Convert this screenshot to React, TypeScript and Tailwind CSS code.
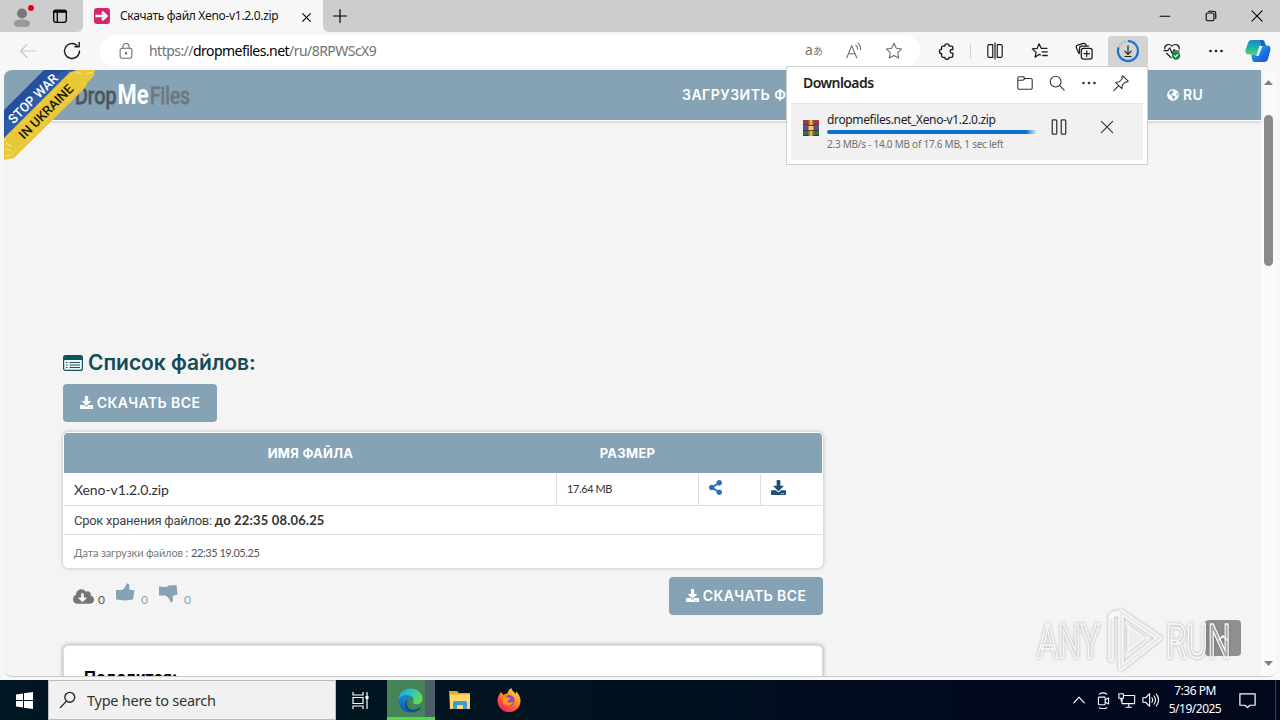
import React from "react";
import { FaDownload, FaShareAlt, FaCloudDownloadAlt, FaGlobeAmericas } from "react-icons/fa";

type IconProps = { children: React.ReactNode; size?: number; className?: string; sw?: number };

function Icon({ children, size = 20, className = "", sw = 1.2 }: IconProps) {
  return (
    <svg width={size} height={size} viewBox="0 0 20 20" fill="none" stroke="currentColor" strokeWidth={sw} strokeLinecap="round" strokeLinejoin="round" className={`shrink-0 ${className}`}>
      {children}
    </svg>
  );
}

function Dots() {
  return (
    <Icon>
      <g fill="currentColor" stroke="none">
        <circle cx="4.500" cy="10" r="1.3" />
        <circle cx="10" cy="10" r="1.3" />
        <circle cx="15.500" cy="10" r="1.3" />
      </g>
    </Icon>
  );
}

function Cell({ children, className = "" }: { children: React.ReactNode; className?: string }) {
  return <div className={`flex w-11 shrink-0 items-center justify-center ${className}`}>{children}</div>;
}

function TitleBar() {
  return (
    <div className="flex h-8 shrink-0 bg-[#f7f7f7]">
      <div className="flex w-[83px] items-center rounded-br-md bg-[#cdcdcd] pl-3">
        <svg width="24" height="26" viewBox="0 0 24 26" className="shrink-0">
          <circle cx="10" cy="10.5" r="5" fill="#777" />
          <path d="M2 20.500c0-3 3-4 8-4s8 1 8 4-3 3.500-8 3.500-8-.5-8-3.500z" fill="#999" />
          <circle cx="19" cy="5" r="3" fill="#e3001b" />
        </svg>
        <Icon size={18} sw={1.500} className="ml-[15px] text-black">
          <rect x="3" y="3.500" width="14" height="13.500" rx="2.500" />
          <path d="M3.500 5.200h13" strokeWidth="2.600" />
          <path d="M7 6v11" />
        </Icon>
      </div>
      <div className="flex w-[240px] items-center pl-[11px]">
        <svg width="16" height="16" viewBox="0 0 16 16" className="shrink-0">
          <rect width="16" height="16" rx="3" fill="#d3286b" />
          <path d="M1.500 8h10M8 4l4.500 4L8 12" stroke="#fff" strokeWidth="2.600" fill="none" />
        </svg>
        <span className="ml-[10px] w-[172px] whitespace-nowrap text-[12px] tracking-[-0.32px] text-[#111]">Скачать файл Xeno-v1.2.0.zip</span>
        <Icon size={11} sw={2} className="ml-[9px] mt-[2px] text-black">
          <path d="M3 3l14 14M17 3L3 17" />
        </Icon>
      </div>
      <div className="flex flex-1 items-center rounded-bl-md bg-[#cdcdcd] pl-[9px] text-black">
        <Icon size={16} sw={1.5}>
          <path d="M10 2v16M2 10h16" />
        </Icon>
        <div className="flex-1" />
        <div className="flex w-[138px]">
          <div className="flex w-[46px] justify-center">
            <Icon size={12} sw={1.900}><path d="M2 10.500h16" /></Icon>
          </div>
          <div className="flex w-[46px] justify-center">
            <Icon size={12} sw={1.800}>
              <rect x="2" y="5" width="13" height="13" rx="2.500" />
              <path d="M6 2h8a4 4 0 0 1 4 4v8" />
            </Icon>
          </div>
          <div className="flex w-[46px] justify-center">
            <Icon size={12} sw={1.800}><path d="M1.500 1.500l17 17M18.500 1.500l-17 17" /></Icon>
          </div>
        </div>
      </div>
    </div>
  );
}

function CopilotLogo() {
  return (
    <svg width="26" height="24" viewBox="0 0 26 24">
      <defs>
        <linearGradient id="cpa" x1="0" y1="0" x2="0" y2="1">
          <stop offset="0" stopColor="#1a86c8" />
          <stop offset=".55" stopColor="#18b7b0" />
          <stop offset="1" stopColor="#5fd15c" />
        </linearGradient>
        <linearGradient id="cpb" x1="0" y1="0" x2="1" y2="1">
          <stop offset="0" stopColor="#2fc0f3" />
          <stop offset=".6" stopColor="#1b6ce0" />
          <stop offset="1" stopColor="#1453c4" />
        </linearGradient>
      </defs>
      <path d="M7 1h9c2 0 2.500 1 3 3l.7 2.500h-2.400c-2 0-3 1-3.600 3L12.500 13c-.6 1.700-1.500 2.500-3 2.500H4c-3 0-4-2-3.300-5L3 4c.7-2 2-3 4-3z" fill="url(#cpa)" />
      <path d="M19 23h-9c-2 0-2.500-1-3-3l-.7-4.500h2.400c2 0 3.500 0 4.300-2.500L14.500 9c.6-1.700 1.300-2.500 2.800-2.500H22c3 0 4 2 3.300 5L23 20c-.7 2-2 3-4 3z" fill="url(#cpb)" />
      <path d="M15 1h2c2 0 2.500 1 3 3l1 3h-5z" fill="#1663c9" />
      <path d="M14.500 7h3l-4 10H9.500c2 0 2.500-1 3-2.500z" fill="#f0fbff" />
    </svg>
  );
}

function Toolbar() {
  return (
    <div className="flex h-[38px] shrink-0 bg-[#f7f7f7] pl-[6px] text-[#1b1b1b]">
      <Cell className="text-[#c9c9c9]">
        <Icon sw={1.200}><path d="M17.500 10H3M9 3.500L2.500 10 9 16.500" /></Icon>
      </Cell>
      <Cell>
        <Icon sw={1.400}><path d="M17.500 10A7.500 7.500 0 1 1 15 4.400M17.200 1.500v4.200H13" /></Icon>
      </Cell>
      <div className="my-[3px] ml-[6px] flex w-[820px] shrink-0 items-center rounded-full bg-white pr-[6px] text-[#6a6a6a]">
        <div className="flex w-[49px] justify-center pl-[3px]">
          <Icon size={18}>
            <rect x="3.500" y="7" width="13" height="11" rx="2" />
            <path d="M6.500 7V5.200a3.500 3.500 0 0 1 7 0V7" />
            <circle cx="10" cy="12.500" r=".8" fill="currentColor" />
          </Icon>
        </div>
        <span className="flex-1 whitespace-nowrap pb-px text-[14px] tracking-[-0.54px] text-[#717171]">
          https://<span className="text-black">dropmefiles.net</span>/ru/8RPWScX9
        </span>
        <div className="flex w-10 justify-center whitespace-nowrap pb-px text-[#777]">
          <span className="text-[14px] leading-5">a</span>
          <span className="font-['Noto_Sans_CJK_JP',sans-serif] text-[10px] leading-[22px]">あ</span>
        </div>
        <div className="flex w-10 justify-center">
          <Icon size={18}><path d="M2 17.500L7.500 4 13 17.500M4 13h7M12 3.500c1.500 1 2 2.500 2 4.500M14.500 1.500c2 1.500 3 4 2.700 7" /></Icon>
        </div>
        <div className="flex w-10 justify-center">
          <Icon size={18} sw={1.200}><path d="M10 1.500l2.600 5.400 5.900.8-4.300 4.100 1 5.900-5.200-2.800-5.200 2.800 1-5.900L1.500 7.700l5.900-.8z" /></Icon>
        </div>
      </div>
      <Cell className="ml-[5px]">
        <Icon size={18} sw={1.500}>
          <path d="M5 4.500h2.500a2.400 2.400 0 0 1 4.800 0H15a1.500 1.500 0 0 1 1.500 1.500v2.300h-1a2 2 0 0 0 0 4h1V15.500a1.500 1.500 0 0 1-1.500 1.500h-2.700a2.400 2.400 0 0 1-4.800 0H5.500A1.500 1.500 0 0 1 4 15.500V13a2.400 2.400 0 1 1 0-4.800V6a1.500 1.500 0 0 1 1-1.500z" />
        </Icon>
      </Cell>
      <div className="my-[12px] ml-px w-px shrink-0 bg-[#cfcfcf]" />
      <Cell className="ml-[2px]">
        <Icon size={18} sw={1.300}>
          <path d="M7.500 3H3.500A1.500 1.500 0 0 0 2 4.500v11A1.500 1.500 0 0 0 3.500 17H7.500zM12.500 3h4A1.500 1.500 0 0 1 18 4.500v11a1.500 1.500 0 0 1-1.500 1.500H12.500zM10 1v18" />
        </Icon>
      </Cell>
      <Cell className="ml-px">
        <Icon size={18} sw={1.400}>
          <path d="M10.500 14.500L9 13.800l-4.500 3 1.200-5.300L1.500 7.600l5.300-.5L9 2l2.300 5h6.500M12.500 11H18M13 15h5" />
        </Icon>
      </Cell>
      <Cell>
        <Icon size={18} sw={1.400}>
          <rect x="7" y="7" width="12" height="12" rx="2.500" />
          <path d="M13 10v6M10 13h6M4.500 13L1.500 6.500C1 5 1.500 4 3 3.500L9.500 1.500c1.500-.3 2.500.2 3 2.200M5 12V7.500C5 6 6 4.500 7.500 4.500H15" />
        </Icon>
      </Cell>
      <Cell>
        <div className="flex h-[31px] w-10 items-center justify-center rounded bg-[#d3d3d3]">
          <svg width="24" height="24" viewBox="0 0 24 24" fill="none">
            <circle cx="12" cy="12" r="10" stroke="#b8c4ce" strokeWidth="2" />
            <path d="M12 2a10 10 0 1 1-9.400 6.500" stroke="#1875c8" strokeWidth="2.200" />
            <path d="M12 6.500v8.500M8.500 11.800L12 15.300l3.500-3.500M8.500 17.500h7" stroke="#222" strokeWidth="1.200" />
          </svg>
        </div>
      </Cell>
      <Cell>
        <Icon size={18} sw={1.300}>
          <path d="M9 17.500L4 12.500M2 7.500c-.5-4 4.500-6.500 8-3 3.500-3.500 8.500-1 8 3.200M1 9.500h4.500l2-3 2.500 6 2.500-4 1.200 1.500H18" />
          <circle cx="14.500" cy="15" r="4" fill="#14853d" stroke="#14853d" />
          <path d="M12.500 15.200l1.500 1.300 2.500-2.700" stroke="#fff" />
        </Icon>
      </Cell>
      <Cell><Dots /></Cell>
      <div className="flex w-10 shrink-0 items-center justify-center"><CopilotLogo /></div>
    </div>
  );
}

function Ribbon() {
  return (
    <svg width="96" height="92" viewBox="0 0 96 92" className="absolute left-0 top-0">
      <path d="M0 66V40L40 0H71L0 69z" fill="#24509a" />
      <path d="M0 52L1 67 68 1 62 0 56 3z" fill="#2d5ca8" />
      <path d="M0 68L66 2 74 0H91L90 6 84 12 80 19 10 88 0 90z" fill="#e9c736" />
      <path d="M0 71L69 3M6 86L82 12" stroke="#f2d862" strokeWidth="1" strokeDasharray="9 4 3 6" />
      <path d="M2 73l5 3M1 79l7 2M1 86l5-1M72 2l5 2M82 4l7-2" stroke="#f3e39c" strokeWidth="1.200" />
      <g fontFamily="Roboto, sans-serif" fontSize="13" fontWeight="500">
        <text transform="translate(9.500 54.500) rotate(-45)" fill="#fff" textLength="64" lengthAdjust="spacingAndGlyphs">STOP WAR</text>
        <text transform="translate(20 70) rotate(-45)" fill="#1c1a10" textLength="71" lengthAdjust="spacingAndGlyphs">IN UKRAINE</text>
      </g>
    </svg>
  );
}

function SiteHeader() {
  return (
    <div className="relative flex h-[51px] shrink-0 items-center border-b border-white bg-[#86a2b5] text-white shadow-[0_1px_3px_rgba(0,0,0,0.18)]">
      <svg width="120" height="40" viewBox="0 -5 120 40" className="ml-[70px]" fontFamily="Roboto, sans-serif" fontSize="23">
        <text x="1" y="23.500" fill="#4c565e" stroke="#4c565e" strokeWidth=".9" textLength="41.500" lengthAdjust="spacingAndGlyphs">Drop</text>
        <text x="43.500" y="23.500" fill="#fff" fontSize="27" fontWeight="700" textLength="31" lengthAdjust="spacingAndGlyphs">Me</text>
        <text x="76" y="23.500" fill="#6b7982" stroke="#6b7982" strokeWidth=".9" textLength="40" lengthAdjust="spacingAndGlyphs">Files</text>
      </svg>
      <span className="ml-[488px] w-[180px] whitespace-nowrap pb-px font-['Inter',sans-serif] text-[14px] font-semibold tracking-[0.5px]">ЗАГРУЗИТЬ ФАЙЛЫ</span>
      <div className="ml-auto mr-[58px] flex items-center gap-[4px] pb-px font-['Inter',sans-serif] text-[14px] font-semibold tracking-[0.300px]">
        <FaGlobeAmericas size={12} />RU
      </div>
      <Ribbon />
    </div>
  );
}

function DownloadAll({ className = "" }: { className?: string }) {
  return (
    <button className={`flex h-[38px] w-[154px] shrink-0 items-center justify-center gap-1 whitespace-nowrap rounded bg-[#86a2b5] pb-px font-['Inter',sans-serif] text-[14px] font-semibold tracking-[0.4px] text-white ${className}`}>
      <FaDownload size={13} />
      <span>СКАЧАТЬ ВСЕ</span>
    </button>
  );
}

function FileTable() {
  return (
    <div className="mt-[10px] flex h-[136px] w-[760px] flex-col overflow-hidden rounded-[5px] border border-white bg-white shadow-[0_0_4px_rgba(0,0,0,0.25)]">
      <div className="flex h-10 shrink-0 items-center bg-[#86a2b5] pt-px font-['Inter',sans-serif] text-[13px] font-bold tracking-[0.3px] text-white">
        <span className="w-[493px] text-center">ИМЯ ФАЙЛА</span>
        <span className="w-[141px] text-center">РАЗМЕР</span>
      </div>
      <div className="flex h-[33px] shrink-0 border-b border-[#ddd] pt-px font-['Lato','Roboto',sans-serif] text-[#333]">
        <div className="flex w-[493px] items-center border-r border-[#ddd] pl-[10px] text-[14px] tracking-[-0.07px]">Xeno-v1.2.0.zip</div>
        <div className="flex w-[142px] items-center border-r border-[#ddd] pl-[10px] text-[11px] tracking-[-0.4px]">17.64 MB</div>
        <div className="flex w-[62px] items-center border-r border-[#ddd] pb-[5px] pl-[9px] text-[#2874b5]"><FaShareAlt size={15} /></div>
        <div className="flex items-center pb-[5px] pl-[10px] text-[#1f4e79]"><FaDownload size={15} /></div>
      </div>
      <div className="flex h-[29px] shrink-0 items-center border-b border-[#ddd] pl-[10px] pt-px text-[13px] text-[#333]">
        <span className="whitespace-nowrap font-['Roboto',sans-serif] tracking-[-0.27px] text-[#444]">Срок хранения файлов:</span>
        <b className="ml-[3px] whitespace-nowrap font-['Lato','Open_Sans',sans-serif] tracking-[0.17px]">до 22:35 08.06.25</b>
      </div>
      <div className="flex flex-1 items-center whitespace-nowrap pl-[10px] pt-1 font-['Lato','Roboto',sans-serif] text-[11px] tracking-[-0.15px] text-[#777]">
        Дата загрузки файлов : <span className="ml-[3px] tracking-[-0.45px] text-[#555]">22:35 19.05.25</span>
      </div>
    </div>
  );
}

function Votes() {
  return (
    <div className="flex items-start pl-[10px] font-['Lato',sans-serif] text-[12px] leading-4 text-[#86a2b5]">
      <FaCloudDownloadAlt size={21} className="mt-[9px] text-[#757575]" />
      <span className="ml-[4px] mt-[15px] text-[#555]">0</span>
      <svg width="19" height="18" viewBox="0 0 19 18" className="ml-[11px] mt-[6px]" fill="currentColor">
        <path d="M0 7h6C8.500 5.500 10 3 10.500.5 13.500 0 14 3 13 6.500L18.500 7.500 18 10 17 16.500 9 17.500 0 16.500z" />
      </svg>
      <span className="ml-[6px] mt-[15px]">0</span>
      <svg width="19" height="18" viewBox="0 0 19 18" className="ml-[11px] mt-[8px]" fill="currentColor">
        <path d="M0 1.500L8 2 9 .5 17.500 0l1 9.500-5 1.500c1 3 .5 6-1.500 6.500C10.500 15.500 10 12 6 10.500H0z" />
      </svg>
      <span className="ml-[6px] mt-[15px]">0</span>
    </div>
  );
}

function Watermark() {
  return (
    <svg width="204" height="72" viewBox="0 0 204 72" className="absolute bottom-0 right-[22px]" style={{ filter: "drop-shadow(0 0 1.5px rgba(0,0,0,.3))" }}>
      <g fontFamily="Roboto, sans-serif" fontSize="49" fill="#f4f4f4" fillOpacity=".35" stroke="#f9f9f9" strokeWidth="1.600">
        <text x="2" y="54" textLength="63" lengthAdjust="spacingAndGlyphs">ANY</text>
        <text x="131" y="54" textLength="65" lengthAdjust="spacingAndGlyphs">RUN</text>
      </g>
      <g fill="none" strokeLinejoin="round" strokeLinecap="round">
        <path d="M76 55V15c0-4 3-6 6-5M86 8l38 26-38 30z" stroke="#f9f9f9" strokeWidth="5.500" />
        <path d="M76 55V15M86 8l38 26-38 30z" stroke="#e9e9e9" strokeWidth="2.500" />
        <path d="M93 22l17 12-17 13z" fill="#eeeeee" stroke="#f9f9f9" strokeWidth="1.500" />
      </g>
    </svg>
  );
}

function Page() {
  return (
    <div className="mx-1 flex h-[607px] shrink-0 overflow-hidden rounded-lg border-b border-[#c9c9c9] bg-[#f4f4f4]">
      <main className="relative flex w-[1257px] flex-col">
        <SiteHeader />
        <div className="mt-[227px] ml-[59px] flex w-[760px] flex-col">
          <h1 className="flex h-[31px] items-center whitespace-nowrap pb-[2px] font-['Inter',sans-serif] text-[21px] font-semibold tracking-[-0.04px] text-[#134c59]">
            <svg width="20" height="16" viewBox="0 0 20 16" className="mr-[5px]">
              <rect x=".6" y=".6" width="18.800" height="14.800" rx="2" fill="none" stroke="#0d5563" strokeWidth="1.200" />
              <path d="M1 1h18v4H1z" fill="#0d5563" />
              <path d="M3 7.500h1.500M3 10h1.500M3 12.500h1.500M6.500 7.500H17M6.500 10H17M6.500 12.500H17" stroke="#0d5563" />
            </svg>
            Список файлов:
          </h1>
          <DownloadAll className="mt-[5px]" />
          <FileTable />
          <div className="mt-[9px] flex justify-between">
            <Votes />
            <DownloadAll />
          </div>
          <div className="mt-[30px] h-[100px] shrink-0 rounded-[5px] border border-[#ddd] bg-white pl-5 pt-[19px] font-['Inter',sans-serif] text-[16px] font-bold text-black shadow-[0_0_4px_rgba(0,0,0,0.35)]">
            Поделится:
          </div>
        </div>
        <button className="absolute bottom-[20px] right-[20px] flex h-9 w-9 items-center justify-center rounded-sm bg-[#909090] text-white">
          <Icon size={14} sw={2.500}><path d="M4 13l6-6 6 6" /></Icon>
        </button>
        <Watermark />
      </main>
      <div className="flex w-[15px] flex-col items-center bg-[#fafafa] py-[9px]">
        <svg width="9" height="6" viewBox="0 0 9 6"><path d="M0 6l4.500-5L9 6z" fill="#7f7f7f" /></svg>
        <div className="mt-[30px] h-[151px] w-[9px] rounded-full bg-[#8b8b8b]" />
        <svg width="9" height="6" viewBox="0 0 9 6" className="mt-auto"><path d="M0 0l4.500 5L9 0z" fill="#7f7f7f" /></svg>
      </div>
    </div>
  );
}

function ArchiveIcon() {
  return (
    <svg width="16" height="16" viewBox="0 0 16 16" className="shrink-0">
      <rect y="0" width="16" height="5.300" fill="#a3383f" />
      <rect y="5.300" width="16" height="5.300" fill="#4c5496" />
      <rect y="10.600" width="16" height="5.400" fill="#2f7241" />
      <path d="M0 5h16M0 10.500h16M0 15.500h16" stroke="#3a2626" strokeWidth=".8" />
      <rect x="5.500" width="5" height="16" fill="#b87937" />
      <rect x="5" y="5.500" width="6" height="5" fill="#e9cf76" stroke="#6e4218" />
      <path d="M8 0v5M8 11v5" stroke="#f0d9a0" strokeWidth="1.200" />
    </svg>
  );
}

function DownloadsPanel() {
  return (
    <div className="absolute left-[786px] top-[66px] flex h-[99px] w-[362px] flex-col border border-[#cfcfcf] bg-white px-1">
      <div className="flex h-[36px] shrink-0 items-center pb-[5px] pl-3 text-[#333]">
        <span className="flex-1 text-[14px] font-semibold tracking-[-0.57px] text-[#222]">Downloads</span>
        <div className="flex w-8 justify-center">
          <Icon size={18}><path d="M2 6V4.500A1.500 1.500 0 0 1 3.500 3H8l2 2h6.500A1.500 1.500 0 0 1 18 6.500v9a1.500 1.500 0 0 1-1.500 1.500h-13A1.500 1.500 0 0 1 2 15.500zM2 7h5.500L10 5" /></Icon>
        </div>
        <div className="flex w-8 justify-center">
          <Icon size={18}><circle cx="8.500" cy="8.500" r="6" /><path d="M13 13l5 5" /></Icon>
        </div>
        <div className="flex w-8 justify-center"><Dots /></div>
        <div className="mr-[6px] flex w-8 justify-center">
          <Icon size={18}><path d="M12 2l6 6-1.500 1-1.500-.2-3.500 3.500-.5 4L4 9.500l4-.8L11.500 5 11 3.500zM7.500 13L2 18.500" /></Icon>
        </div>
      </div>
      <div className="flex h-[57px] border-t border-[#e3e3e3] bg-[#f1f1f1] pl-3">
        <div className="pt-[16px]"><ArchiveIcon /></div>
        <div className="ml-[8px] w-[210px] pt-[8px]">
          <div className="whitespace-nowrap text-[12px] leading-4 tracking-[-0.35px] text-[#222]">dropmefiles.net_Xeno-v1.2.0.zip</div>
          <div className="mt-[2px] h-1 rounded-full bg-linear-to-r from-[#0a70cc] from-95% to-[#f1f1f1]" />
          <div className="mt-[2px] whitespace-nowrap text-[10px] leading-4 tracking-[-0.25px] text-[#707070]">2.3 MB/s - 14.0 MB of 17.6 MB, 1 sec left</div>
        </div>
        <Icon size={18} className="ml-[13px] mt-[14px] text-[#333]" sw={1.400}>
          <rect x="2.500" y="2" width="5" height="16" rx="1" />
          <rect x="12.500" y="2" width="5" height="16" rx="1" />
        </Icon>
        <Icon size={16} className="ml-[31px] mt-[15px] text-[#333]" sw={1.400}><path d="M3 3l14 14M17 3L3 17" /></Icon>
      </div>
    </div>
  );
}

function EdgeLogo() {
  return (
    <svg width="25" height="25" viewBox="0 0 24 24">
      <defs>
        <linearGradient id="ea" x1="0" y1="0" x2="1" y2=".3"><stop offset="0" stopColor="#22a5d8" /><stop offset=".5" stopColor="#2bc3c5" /><stop offset="1" stopColor="#63d957" /></linearGradient>
        <linearGradient id="eb" x1="0" y1="0" x2="0" y2="1"><stop offset="0" stopColor="#168bd2" /><stop offset="1" stopColor="#0c59a4" /></linearGradient>
      </defs>
      <path d="M.5 11C1 4.500 6 .5 12 .5S23.500 5 23.500 10c0 3.500-2.700 5.500-5.800 5.500-2.200 0-3.700-.8-3.700-1.500 0-.5 1-1 1-2.500C15 9 12 7 8.500 7 4.500 7 1.500 9 .5 11z" fill="url(#ea)" />
      <path d="M.5 12C1 9 4.500 7 8.500 7c3 0 5 1.200 6 3-3.500-1.500-7 1-7 5 0 4.500 3.500 8.300 7.300 8.100C13.800 23.400 13 23.500 12 23.500 5.500 23.500.2 18.500.5 12z" fill="url(#eb)" />
      <path d="M9.500 11.500C7 16 9.500 20.500 14 20.800c3 .2 5.700-1.200 7.500-2.600.5-.3.8 0 .5.500-1.700 2.700-4.300 4.400-7.200 4.500C10 23.500 7 19.500 7 16c0-2 1-3.600 2.500-4.500z" fill="#114a8b" />
    </svg>
  );
}

function FirefoxLogo() {
  return (
    <svg width="24" height="24" viewBox="0 0 24 24">
      <defs>
        <linearGradient id="fa" x1=".85" y1="0" x2=".2" y2="1"><stop offset="0" stopColor="#ffe14a" /><stop offset=".45" stopColor="#ff8a1e" /><stop offset=".8" stopColor="#fb3750" /><stop offset="1" stopColor="#e3188a" /></linearGradient>
      </defs>
      <path d="M4 4l2.500 3C8 5.800 9.500 5.500 10.500 5.500 11 3 12.500 1 14.500 0c0 2.500 2.500 3.500 4 6 .5-.7.500-1.500.5-2.500 2.500 2 4.500 5.500 4.500 9A11.500 11.500 0 0 1 .5 13C.5 9 2 7 4 4z" fill="url(#fa)" />
      <circle cx="12" cy="12.500" r="5.500" fill="#8049d8" />
      <path d="M6 9c2-1.500 4-.5 5 .8 1 .2 2.500 0 2.500.7 0 1-2 1.500-3 2.500 1 2 4 2 6 .5-1 3-4 5-7.500 4S4.500 12 6 9z" fill="#ff9125" />
    </svg>
  );
}

function FolderLogo() {
  return (
    <svg width="22" height="20" viewBox="0 0 22 20">
      <path d="M0 1h8l2 2h11v16H1z" fill="#e8a82d" />
      <rect x="1" y="4.500" width="20" height="14.500" fill="#ffd868" />
      <path d="M4 19v-6.500l1.500-1.500h11l1.500 1.500V19h-4v-4H8v4z" fill="#3e9bd7" />
    </svg>
  );
}

function Taskbar() {
  return (
    <div className="mt-auto flex h-10 shrink-0 bg-[linear-gradient(90deg,#001620_0%,#00131f_45%,#020a20_75%,#03081c_100%)] text-white">
      <div className="flex w-12 items-center justify-center">
        <svg width="17" height="17" viewBox="0 0 17 17" fill="#fff"><path d="M0 2.400l7-1V8H0zM8 1.200L17 0v8H8zM0 9h7v6.600l-7-1zM8 9h9v8l-9-1.200z" /></svg>
      </div>
      <div className="flex w-[288px] items-center border border-[#bdbdbd] bg-[#f1f1f1] pl-[10px] text-[#333]">
        <Icon size={18} sw={1.500} className="text-[#222]"><circle cx="12" cy="7" r="5.500" /><path d="M8 11.500L1.500 18.500" /></Icon>
        <span className="ml-[10px] whitespace-nowrap pt-px text-[14.500px] tracking-[-0.25px]">Type here to search</span>
      </div>
      <div className="ml-[1px] flex w-[46px] items-center justify-center">
        <svg width="17" height="17" viewBox="0 0 17 17" fill="none" stroke="#fff" strokeWidth="1.200"><path d="M1 0v3h10V0M1 17v-3h10v3M1 5.500h10v6H1zM15 0v17" /><path d="M15 4v3" strokeWidth="3" /></svg>
      </div>
      <div className="ml-[4px] flex w-[48px] border-b-[3px] border-[#55d44d] bg-[#4d5f66]">
        <div className="flex w-[38px] items-center justify-center bg-[#468359] pl-[8px] pt-[3px]"><EdgeLogo /></div>
      </div>
      <div className="flex w-12 items-center justify-center pl-[2px]"><FolderLogo /></div>
      <div className="flex w-[52px] items-center justify-center"><FirefoxLogo /></div>
      <div className="ml-auto flex items-center">
        <Icon size={14} sw={1.700}><path d="M2.500 14l7.500-8 7.500 8" /></Icon>
        <Icon size={17} sw={1.300} className="ml-[9px]"><rect x="4" y="6" width="8" height="9" rx="1" /><path d="M12 9l4-2v7l-4-2M5 2.500c3-2 6-2 9 0M5 18.500c3 1.500 6 1.500 9 0" /></Icon>
        <Icon size={18} sw={1.200} className="ml-[6px]"><path d="M7 5h11.500v9H4.500V9M9 18h6M12 14v4M1 3h5v5H1zM3.500 8v3" /></Icon>
        <Icon size={18} sw={1.200} className="ml-[6px]"><path d="M1 7.500h3L8.500 3v14L4 12.500H1zM11 7.500c1 1.500 1 3.500 0 5M13.500 5.500c2 3 2 6 0 9M16 3.500c3 4 3 9 0 13" /></Icon>
        <div className="ml-[5px] flex w-[60px] flex-col items-center whitespace-nowrap text-[12px] leading-[18px] tracking-[-0.5px]">
          <span>7:36 PM</span>
          <span>5/19/2025</span>
        </div>
        <Icon size={19} sw={1.300} className="ml-[13px]"><path d="M2 3h16v12h-5.500L10 17.500 7.500 15H2z" /></Icon>
        <div className="ml-[18px] h-10 w-[5px] border-l border-[#3a4052]" />
      </div>
    </div>
  );
}

export default function App() {
  return (
    <div className="relative flex h-[720px] w-[1280px] flex-col overflow-hidden bg-[#f7f7f7] font-['Noto_Sans',sans-serif]">
      <TitleBar />
      <Toolbar />
      <Page />
      <Taskbar />
      <DownloadsPanel />
    </div>
  );
}
